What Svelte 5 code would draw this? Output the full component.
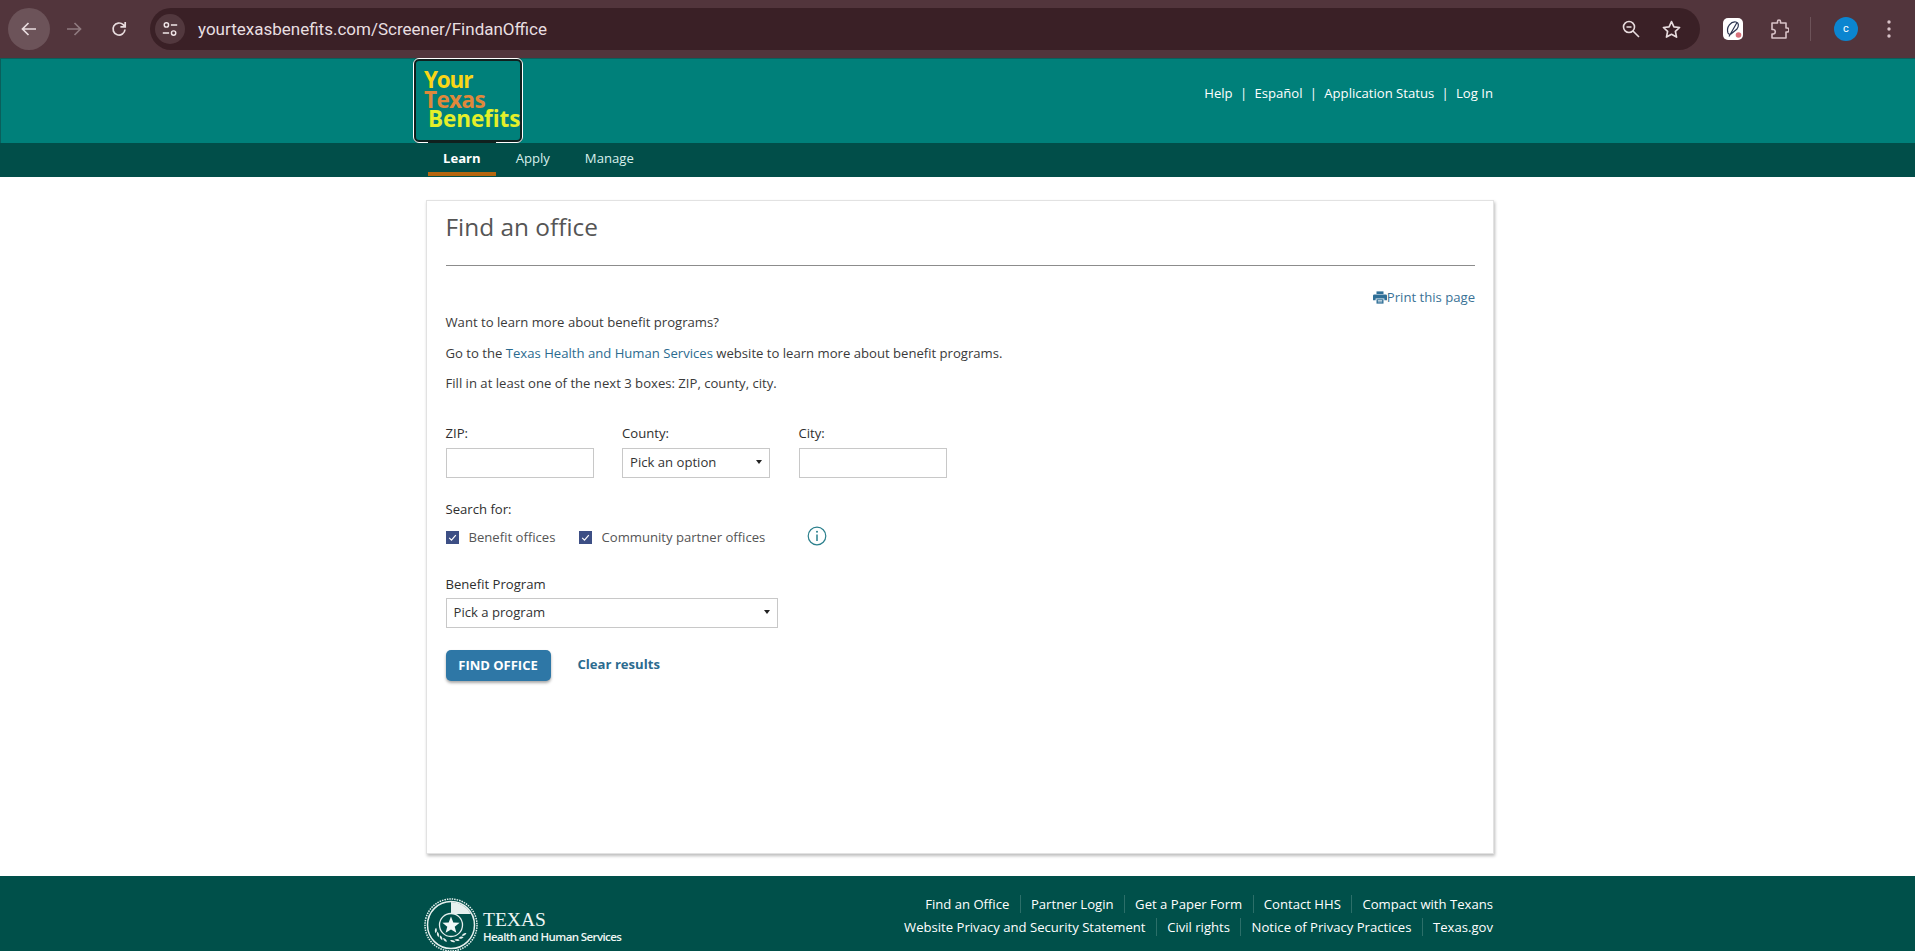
<script>
  const headerLinks = ['Help', 'Español', 'Application Status', 'Log In'];
  const navItems = ['Learn', 'Apply', 'Manage'];
  const footerRows = [
    ['Find an Office', 'Partner Login', 'Get a Paper Form', 'Contact HHS', 'Compact with Texans'],
    ['Website Privacy and Security Statement', 'Civil rights', 'Notice of Privacy Practices', 'Texas.gov']
  ];
  const leaves = [-62, -46, -30, -14, 14, 30, 46, 62];
</script>

<div class="page">
  <div class="chrome">
    <button class="nav-btn back" aria-label="Back">
      <svg viewBox="0 0 20 20" width="20" height="20"><path d="M17 10H4M9.500 4 3.500 10l6 6" fill="none" stroke="#e8dcde" stroke-width="1.700"/></svg>
    </button>
    <button class="nav-btn" aria-label="Forward">
      <svg viewBox="0 0 20 20" width="20" height="20"><path d="M3 10h13M10.500 4l6 6-6 6" fill="none" stroke="#8f7a7f" stroke-width="1.700"/></svg>
    </button>
    <button class="nav-btn" aria-label="Reload">
      <svg viewBox="0 0 20 20" width="20" height="20"><path d="M16 10.500A6 6 0 1 1 14.200 5.700L16 7.600M16.200 3v4.800h-4.800" fill="none" stroke="#e8dcde" stroke-width="1.700"/></svg>
    </button>
    <div class="omnibox">
      <span class="site-icon">
        <svg viewBox="0 0 20 20" width="18" height="18"><circle cx="6" cy="5.500" r="2.400" fill="none" stroke="#f0e6e8" stroke-width="1.600"/><path d="M11 5.500h7M2 14.500h7" stroke="#f0e6e8" stroke-width="1.600"/><circle cx="14" cy="14.500" r="2.400" fill="none" stroke="#f0e6e8" stroke-width="1.600"/></svg>
      </span>
      <span class="url">yourtexasbenefits.com/Screener/FindanOffice</span>
      <span class="omni-icons">
        <svg viewBox="0 0 20 20" width="20" height="20"><circle cx="8" cy="8" r="5.500" fill="none" stroke="#e8dcde" stroke-width="1.600"/><path d="M5.500 8h5M12 12l6 6" stroke="#e8dcde" stroke-width="1.600"/></svg>
        <svg viewBox="0 0 20 20" width="21" height="21"><path d="M10 2.500l2.300 5 5.400.6-4 3.700 1.100 5.400L10 14.500l-4.800 2.700 1.100-5.400-4-3.700 5.400-.6z" fill="none" stroke="#e8dcde" stroke-width="1.600" stroke-linejoin="round"/></svg>
      </span>
    </div>
    <span class="ext-tile">
      <svg viewBox="0 0 20 22" width="20" height="22"><rect width="20" height="22" rx="5" fill="#fff"/><path d="M5 15C3 9 8 3 13 4c3 .6 3 4 1 7l-6 5c-1 .6-2.400.3-3-1zM6 18.500l8-14" fill="none" stroke="#2c3550" stroke-width="1.200"/><circle cx="15.500" cy="17" r="2.800" fill="#d8707a"/></svg>
    </span>
    <svg class="puzzle" viewBox="0 0 20 22" width="20" height="22"><path d="M3 5h5.500V3.500a1.500 1.500 0 0 1 3 0V5H17v5h1a2 2 0 0 1 0 4h-1v6H3v-4h1.500a2.300 2.300 0 0 0 0-4.500H3z" fill="none" stroke="#d9c3c8" stroke-width="1.600" stroke-linejoin="round"/></svg>
    <span class="divider"></span>
    <span class="avatar">c</span>
    <svg class="dots" viewBox="0 0 4 18" width="4" height="18"><circle cx="2" cy="2" r="1.700" fill="#d9c3c8"/><circle cx="2" cy="9" r="1.700" fill="#d9c3c8"/><circle cx="2" cy="16" r="1.700" fill="#d9c3c8"/></svg>
  </div>

  <header class="masthead">
    <div class="masthead-inner">
      <a class="logo" href="#top">
        <span class="l1">Your</span>
        <span class="l2">Texas</span>
        <span class="l3">Benefits</span>
      </a>
      <nav class="top-links">
        {#each headerLinks as link, i}
          {#if i > 0}<span class="pipe">|</span>{/if}
          <a href="#top">{link}</a>
        {/each}
      </nav>
    </div>
  </header>

  <nav class="tabs">
    {#each navItems as item, i}
      <a href="#top" class="tab" class:active={i === 0}>{item}</a>
    {/each}
  </nav>

  <main class="content">
    <section class="card">
      <h1>Find an office</h1>
      <hr />
      <div class="print-row">
        <a href="#top" class="print">
          <svg viewBox="0 0 16 14" width="14" height="13"><path d="M4 0h8v3H4z" fill="#2f6f97"/><path d="M1.500 3.500h13A1.500 1.500 0 0 1 16 5v5h-3V8H3v2H0V5a1.500 1.500 0 0 1 1.500-1.500z" fill="#2f6f97"/><path d="M4 9h8v5H4z" fill="#2f6f97"/><path d="M5.500 10.500h5M5.500 12h5" stroke="#fff" stroke-width=".8"/></svg>Print this page
        </a>
      </div>
      <p>Want to learn more about benefit programs?</p>
      <p>Go to the <a href="#top">Texas Health and Human Services</a> website to learn more about benefit programs.</p>
      <p>Fill in at least one of the next 3 boxes: ZIP, county, city.</p>

      <div class="fields">
        <label class="field"><span>ZIP:</span><input type="text" /></label>
        <label class="field"><span>County:</span>
          <span class="select"><span class="sel-text">Pick an option</span><i class="caret"></i></span>
        </label>
        <label class="field"><span>City:</span><input type="text" /></label>
      </div>

      <div class="search-label">Search for:</div>
      <div class="checks">
        <label class="check first">
          <span class="box"><svg viewBox="0 0 13 13" width="13" height="13"><path d="M3.200 6.800l2.300 2.300 4.300-5" fill="none" stroke="#fff" stroke-width="1.200"/></svg></span>Benefit offices
        </label>
        <label class="check second">
          <span class="box"><svg viewBox="0 0 13 13" width="13" height="13"><path d="M3.200 6.800l2.300 2.300 4.300-5" fill="none" stroke="#fff" stroke-width="1.200"/></svg></span>Community partner offices
        </label>
        <svg class="info" viewBox="0 0 20 20" width="20" height="20"><circle cx="10" cy="10" r="8.800" fill="none" stroke="#2a7f8c" stroke-width="1.200"/><circle cx="10" cy="5.800" r="1" fill="#2a7f8c"/><path d="M10 8.500v6.500" stroke="#2a7f8c" stroke-width="1.500"/></svg>
      </div>

      <div class="program-label">Benefit Program</div>
      <span class="select program"><span class="sel-text">Pick a program</span><i class="caret"></i></span>

      <div class="actions">
        <button class="find">FIND OFFICE</button>
        <a href="#top" class="clear">Clear results</a>
      </div>
    </section>
  </main>

  <footer class="footer">
    <div class="footer-inner">
      <div class="hhs">
        <svg class="seal" viewBox="0 0 54 54" width="54" height="54">
          <circle cx="27" cy="27" r="26" fill="none" stroke="#e6f0ee" stroke-width="1.500" stroke-dasharray="1.500 1"/>
          <circle cx="27" cy="27" r="23.500" fill="none" stroke="#e6f0ee" stroke-width="1.500"/>
          <path d="M27 4a23 23 0 0 1 20 12H27z" fill="#e6f0ee"/>
          <circle cx="27" cy="27" r="11.500" fill="#00504a" stroke="#e6f0ee" stroke-width="1.300"/>
          <path d="M27 18.500l2.300 5.900 6.300.3-4.900 4 1.700 6.100-5.400-3.400-5.400 3.400 1.700-6.100-4.900-4 6.300-.3z" fill="#f1f7f6"/>
          {#each leaves as a}
            <g transform="rotate({a} 27 27)">
              <path d="M27 44.500c-3 0-4-1.500-4.500-3 2.500 0 4 1 4.500 3z" fill="#e6f0ee"/>
            </g>
          {/each}
        </svg>
        <div class="hhs-text">
          <div class="tx">TEXAS</div>
          <div class="hhs-name">Health and Human Services</div>
        </div>
      </div>
      <div class="footer-links">
        {#each footerRows as row}
          <div class="footer-row">
            {#each row as link}
              <a href="#top">{link}</a>
            {/each}
          </div>
        {/each}
      </div>
    </div>
  </footer>
</div>

<style>
  :global(body) {
    margin: 0;
    background: #fff;
    overflow: hidden;
  }
  .page {
    height: 951px;
    overflow: hidden;
    font-family: "Open Sans", "Noto Sans", sans-serif;
    font-size: 13.120px;
    color: #3a3a3a;
    display: flex;
    flex-direction: column;
  }
  a { text-decoration: none; }

  .chrome {
    height: 58px;
    flex: none;
    background: #52353c;
    display: flex;
    align-items: center;
    padding-left: 8px;
    box-sizing: border-box;
  }
  .nav-btn {
    width: 42px;
    height: 42px;
    border: 0;
    border-radius: 50%;
    background: none;
    padding: 0;
    margin-right: 3px;
    display: flex;
    align-items: center;
    justify-content: center;
  }
  .nav-btn.back { background: #6c5359; }
  .omnibox {
    margin-left: 7px;
    width: 1550px;
    height: 42px;
    border-radius: 21px;
    background: #3a2026;
    display: flex;
    align-items: center;
    padding: 0 14px 0 5px;
    box-sizing: border-box;
  }
  .site-icon {
    width: 30px;
    height: 30px;
    border-radius: 50%;
    background: #52383e;
    display: flex;
    align-items: center;
    justify-content: center;
  }
  .url {
    margin-left: 13px;
    font-family: Roboto, "Liberation Sans", sans-serif;
    font-size: 17px;
    color: #e8dfe0;
    flex: 1;
  }
  .omni-icons {
    display: flex;
    align-items: center;
    gap: 20px;
    margin-right: 4px;
  }
  .ext-tile { margin-left: 23px; display: flex; }
  .puzzle { margin-left: 26px; }
  .divider { width: 1px; height: 24px; background: #6d5359; margin-left: 21px; }
  .avatar {
    margin-left: 23px;
    width: 24px;
    height: 24px;
    border-radius: 50%;
    background: #0b85d0;
    color: #fff;
    font: 11px/24px Roboto, sans-serif;
    text-align: center;
  }
  .dots { margin-left: 29px; }

  .masthead {
    height: 85px;
    flex: none;
    background: #00807a;
    box-shadow: inset 1px 1px 0 #0a5f5b;
  }
  .masthead-inner {
    margin-left: 413px;
    width: 1080px;
    height: 85px;
    display: flex;
    justify-content: space-between;
    align-items: flex-start;
  }
  .logo {
    width: 110px;
    height: 85px;
    box-sizing: border-box;
    border: 3px solid #10201e;
    outline: 1px solid #fff;
    outline-offset: -1px;
    border-radius: 6px;
    padding: 9px 0 0 8px;
    font-family: "Open Sans", sans-serif;
    font-weight: 700;
    font-size: 22.500px;
    line-height: 19.500px;
    display: flex;
    flex-direction: column;
  }
  .l1 { color: #f9d616; letter-spacing: -1.200px; }
  .l2 { color: #e0883a; letter-spacing: -.6px; }
  .l3 { color: #e4ef2a; margin-left: 4px; letter-spacing: -.1px; }
  .top-links {
    display: flex;
    gap: 7.300px;
    color: #fff;
    padding-top: 26px;
    line-height: 18px;
  }
  .top-links a { color: #fff; }

  .tabs {
    height: 34px;
    flex: none;
    background: #014e49;
    display: flex;
    padding-left: 428px;
    box-sizing: border-box;
    position: relative;
  }
  .tab {
    color: #d8f0ec;
    line-height: 30px;
    padding: 0 15px;
    margin-right: 5px;
  }
  .tab.active {
    color: #fff;
    font-weight: 700;
    height: 33px;
    box-sizing: border-box;
    border-bottom: 4px solid #b5660f;
    position: relative;
    padding: 0 15px;
  }
  .tab.active::before {
    content: "";
    position: absolute;
    left: 0;
    right: 0;
    top: -1px;
    height: 1px;
    background: #10201e;
  }

  .content {
    flex: none;
    padding: 23px 0 22px 426px;
  }
  .card {
    width: 1068px;
    height: 654px;
    box-sizing: border-box;
    border: 1px solid #e2e2e2;
    box-shadow: 1px 2px 3px #bcbcbc;
    padding: 12px 18px 0 18.500px;
  }
  h1 {
    margin: 0;
    font-weight: 400;
    font-size: 24.400px;
    line-height: 28px;
    color: #555;
  }
  hr {
    margin: 24px 0 0;
    border: 0;
    height: 1px;
    background: #8c8c8c;
  }
  .print-row {
    display: flex;
    justify-content: flex-end;
    margin-top: 22px;
    height: 18px;
  }
  .print {
    color: #3a7296;
    display: flex;
    align-items: center;
    line-height: 18px;
  }
  p {
    margin: 0 0 12.500px;
    line-height: 18px;
  }
  .print-row + p { margin-top: 7px; }
  p a { color: #2b6b8f; }

  .fields {
    display: flex;
    gap: 28.500px;
    margin-top: 32px;
  }
  .field {
    display: flex;
    flex-direction: column;
    width: 148px;
    font-weight: 500;
    color: #2e2e2e;
  }
  .field > span:first-child { line-height: 18px; margin-bottom: 6px; }
  input, .select {
    box-sizing: border-box;
    height: 30px;
    border: 1px solid #c8c8c8;
    background: #fff;
    margin: 0;
    outline: none;
  }
  .select {
    display: flex;
    align-items: center;
    justify-content: space-between;
    padding: 0 7px 2px;
    font-weight: 400;
    color: #333;
  }
  .caret {
    width: 0;
    height: 0;
    border-left: 3.500px solid transparent;
    border-right: 3.500px solid transparent;
    border-top: 4px solid #222;
  }
  .search-label {
    margin-top: 22px;
    line-height: 18px;
    font-weight: 500;
    color: #2e2e2e;
  }
  .checks {
    display: flex;
    align-items: center;
    margin-top: 9px;
    height: 20px;
  }
  .check {
    display: flex;
    align-items: center;
    color: #555;
  }
  .check.first { width: 133px; }
  .check.second { width: 228px; }
  .box {
    width: 13px;
    height: 13px;
    background: #3d4f85;
    margin-right: 10px;
    display: flex;
  }
  .info { margin-top: -2px; }
  .program-label {
    margin-top: 28px;
    line-height: 18px;
    font-weight: 500;
    color: #2e2e2e;
  }
  .select.program {
    margin-top: 5px;
    width: 332px;
    box-sizing: border-box;
  }
  .actions {
    display: flex;
    align-items: center;
    margin-top: 22px;
  }
  .find {
    width: 105px;
    height: 31px;
    border: 0;
    border-radius: 5px;
    background: #2e77a6;
    color: #fff;
    font: 700 13px "Open Sans", sans-serif;
    padding: 0 0 2px;
    box-shadow: 0 2px 3px #a9a9a9;
  }
  .clear {
    margin-left: 27px;
    margin-top: -4px;
    color: #2b6b8f;
    font-weight: 700;
  }

  .footer {
    flex: 1;
    background: #00504a;
    min-height: 75px;
  }
  .footer-inner {
    margin-left: 424px;
    width: 1069px;
    display: flex;
    justify-content: space-between;
    padding-top: 19px;
  }
  .hhs {
    display: flex;
    align-items: flex-start;
    gap: 5px;
    margin-top: 3px;
  }
  .seal { flex: none; }
  .hhs-text { color: #eef6f4; padding-top: 11px; }
  .tx {
    font-family: "Liberation Serif", serif;
    font-size: 19.500px;
    line-height: 21px;
  }
  .hhs-name {
    font-family: "Open Sans", sans-serif;
    font-weight: 600;
    font-size: 11.500px;
    line-height: 14px;
    letter-spacing: -.6px;
    margin-top: 0;
  }
  .footer-links {
    display: flex;
    flex-direction: column;
    gap: 5px;
    align-items: flex-end;
  }
  .footer-row {
    display: flex;
    line-height: 18px;
  }
  .footer-row a {
    color: #fff;
    padding: 0 10.300px;
    border-left: 1px solid #2c6f69;
  }
  .footer-row a:first-child { border-left: 0; }
  .footer-row a:last-child { padding-right: 0; }
</style>
